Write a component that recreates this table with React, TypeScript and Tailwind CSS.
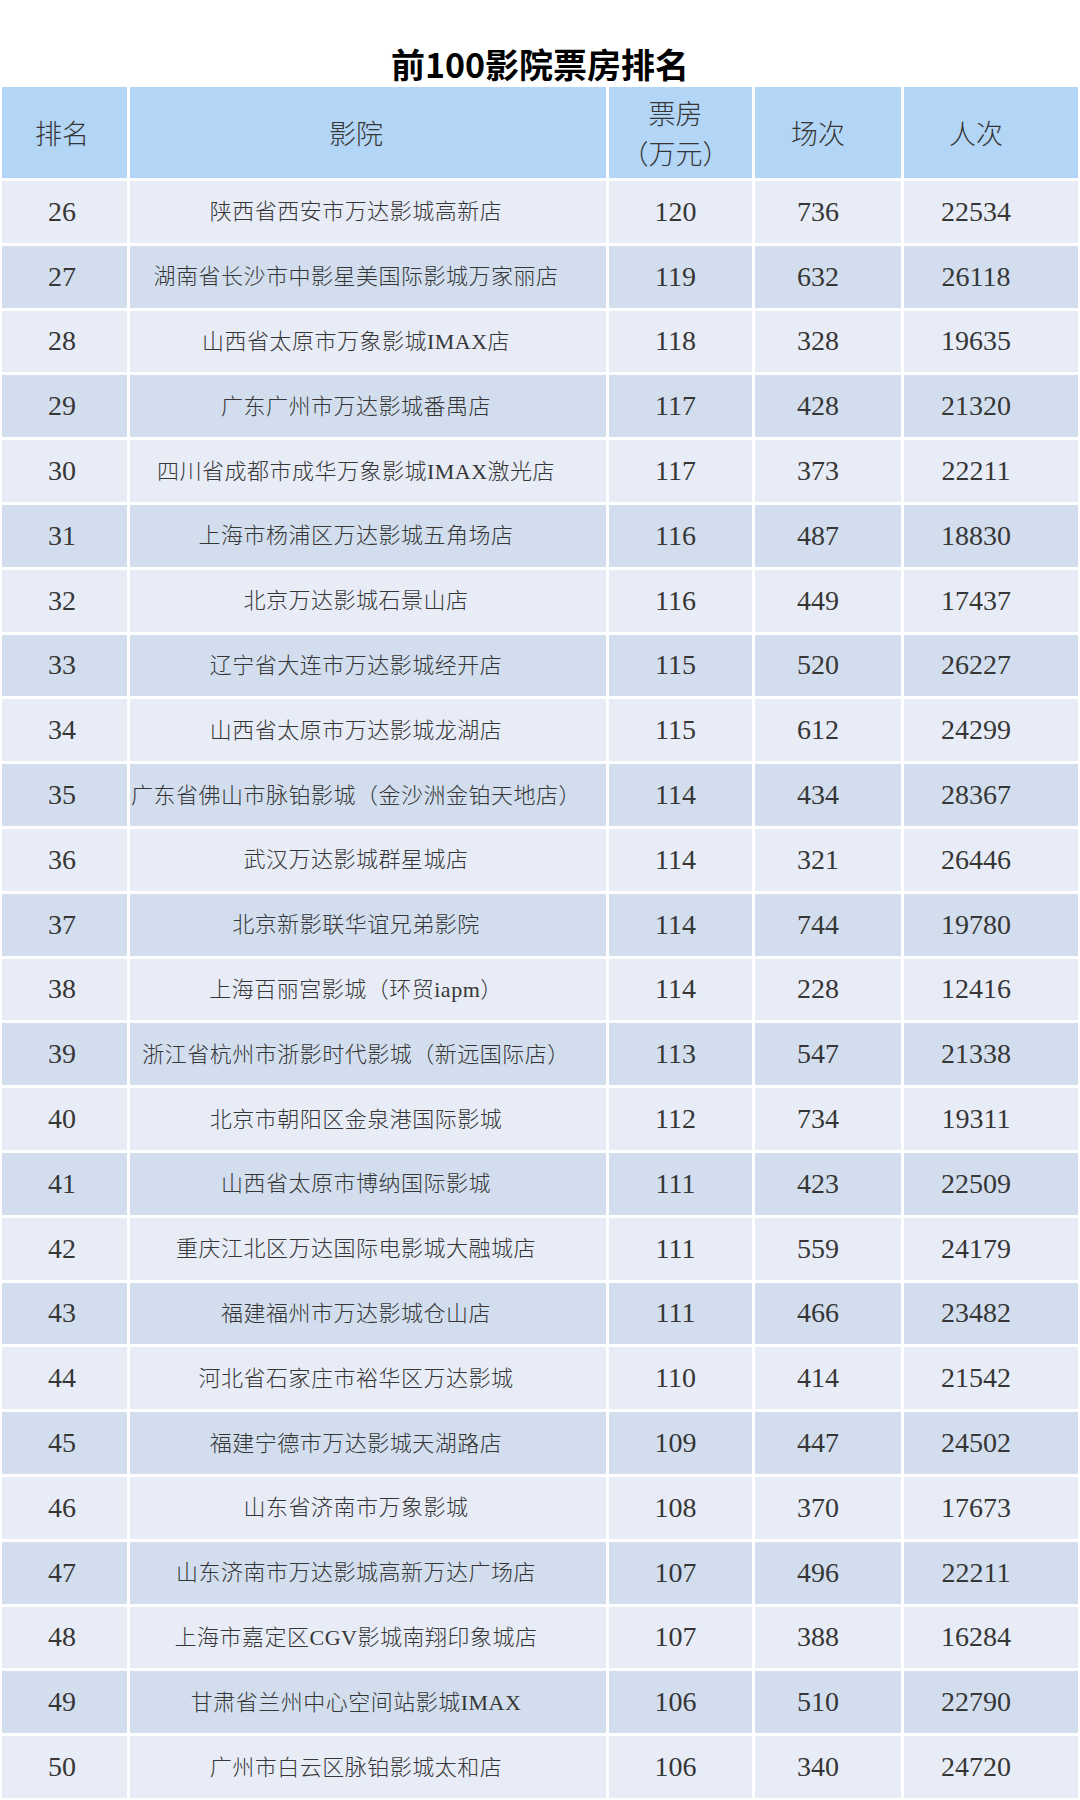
const ROWS: [number, string, number, number, number][] = [
  [26, '陕西省西安市万达影城高新店', 120, 736, 22534],
  [27, '湖南省长沙市中影星美国际影城万家丽店', 119, 632, 26118],
  [28, '山西省太原市万象影城IMAX店', 118, 328, 19635],
  [29, '广东广州市万达影城番禺店', 117, 428, 21320],
  [30, '四川省成都市成华万象影城IMAX激光店', 117, 373, 22211],
  [31, '上海市杨浦区万达影城五角场店', 116, 487, 18830],
  [32, '北京万达影城石景山店', 116, 449, 17437],
  [33, '辽宁省大连市万达影城经开店', 115, 520, 26227],
  [34, '山西省太原市万达影城龙湖店', 115, 612, 24299],
  [35, '广东省佛山市脉铂影城（金沙洲金铂天地店）', 114, 434, 28367],
  [36, '武汉万达影城群星城店', 114, 321, 26446],
  [37, '北京新影联华谊兄弟影院', 114, 744, 19780],
  [38, '上海百丽宫影城（环贸iapm）', 114, 228, 12416],
  [39, '浙江省杭州市浙影时代影城（新远国际店）', 113, 547, 21338],
  [40, '北京市朝阳区金泉港国际影城', 112, 734, 19311],
  [41, '山西省太原市博纳国际影城', 111, 423, 22509],
  [42, '重庆江北区万达国际电影城大融城店', 111, 559, 24179],
  [43, '福建福州市万达影城仓山店', 111, 466, 23482],
  [44, '河北省石家庄市裕华区万达影城', 110, 414, 21542],
  [45, '福建宁德市万达影城天湖路店', 109, 447, 24502],
  [46, '山东省济南市万象影城', 108, 370, 17673],
  [47, '山东济南市万达影城高新万达广场店', 107, 496, 22211],
  [48, '上海市嘉定区CGV影城南翔印象城店', 107, 388, 16284],
  [49, '甘肃省兰州中心空间站影城IMAX', 106, 510, 22790],
  [50, '广州市白云区脉铂影城太和店', 106, 340, 24720],
];

const GRID = 'grid grid-cols-[125px_476px_143px_146px_174px] gap-x-[3px]';
const SERIF = "font-['Liberation_Serif','Noto_Sans_CJK_SC',serif]";

export default function App() {
  return (
    <div className="w-[1080px] h-[1800px] overflow-hidden bg-white text-[#363636] font-['Noto_Sans_CJK_SC',sans-serif]">
      {/* Title */}
      <div className="h-[87px] pt-[44px] text-center">
        <h1 className="text-[34px] leading-[40px] font-bold text-black">前100影院票房排名</h1>
      </div>

      <div className="px-[2px] flex flex-col gap-y-[3px]">
        {/* Header */}
        <div className={`${GRID} h-[91px] text-[27px] leading-[40px] font-light`}>
          <div className="bg-[#b3d5f6] flex items-center justify-center pr-[5px]">排名</div>
          <div className="bg-[#b3d5f6] flex items-center justify-center pr-[24px]">影院</div>
          <div className="bg-[#b3d5f6] flex flex-col items-center justify-center pr-[10px]">
            <span>票房</span>
            <span>（万元）</span>
          </div>
          <div className="bg-[#b3d5f6] flex items-center justify-center pr-[20px]">场次</div>
          <div className="bg-[#b3d5f6] flex items-center justify-center pr-[30px]">人次</div>
        </div>

        {/* Body rows */}
        {ROWS.map(([rank, name, box, shows, people], i) => {
          const bg = i % 2 === 0 ? 'bg-[#e8ecf6]' : 'bg-[#d2deee]';
          return (
            <div key={rank} className={`${GRID} h-[61.8px] ${SERIF}`}>
              <div className={`${bg} flex items-center justify-center pr-[5px] text-[28px]`}>{rank}</div>
              <div className={`${bg} flex items-center justify-center pr-[24px] text-[22px] tracking-[0.5px] font-light whitespace-nowrap`}>
                {name}
              </div>
              <div className={`${bg} flex items-center justify-center pr-[10px] text-[28px]`}>{box}</div>
              <div className={`${bg} flex items-center justify-center pr-[20px] text-[28px]`}>{shows}</div>
              <div className={`${bg} flex items-center justify-center pr-[30px] text-[28px]`}>{people}</div>
            </div>
          );
        })}
      </div>
    </div>
  );
}
